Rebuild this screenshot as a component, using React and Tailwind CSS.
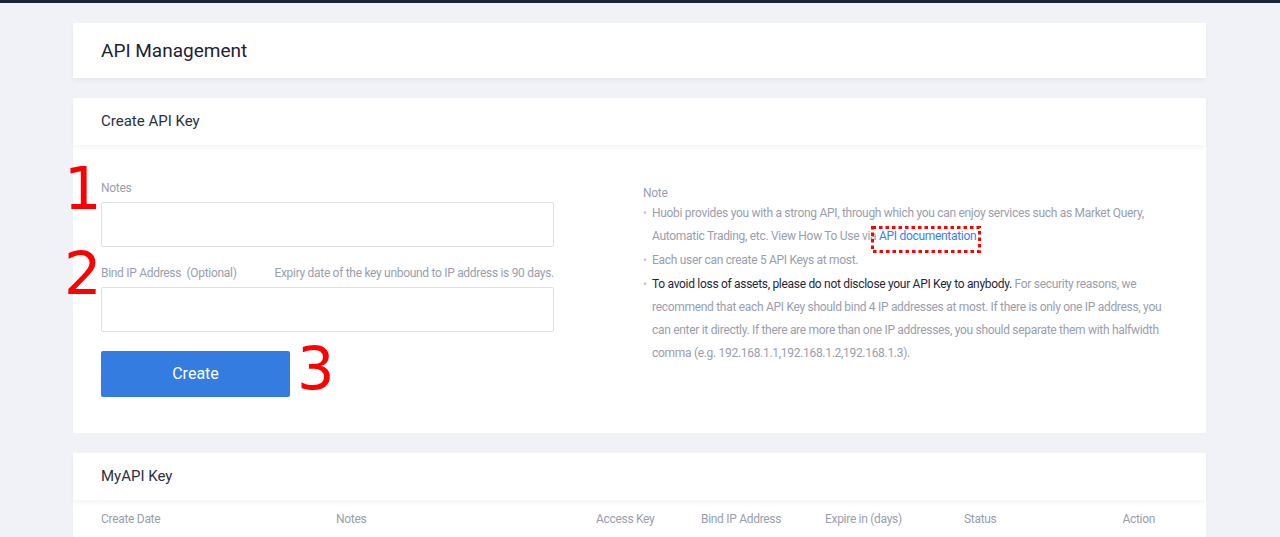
import React from 'react';

const font = { fontFamily: 'Roboto, "Liberation Sans", sans-serif' };

function Mark({ children, className }) {
  return (
    <span
      className={`absolute text-[#ff0000] text-[59px] leading-[60px] ${className}`}
      style={{ fontFamily: '"DejaVu Sans", sans-serif' }}
    >
      {children}
    </span>
  );
}

function CardHeader({ title, big }) {
  return (
    <div
      className={`relative z-10 bg-white px-[28px] flex items-center shadow-[0_3px_5px_rgba(30,35,60,0.04)] ${
        big ? 'h-[55px] pt-[2px] text-[19px] text-[#1d2235]' : 'h-[47px] text-[15px] text-[#2a2f42]'
      }`}
    >
      {title}
    </div>
  );
}

export default function App() {
  const columns = [
    { label: 'Create Date', w: 'w-[235px]' },
    { label: 'Notes', w: 'w-[260px]' },
    { label: 'Access Key', w: 'w-[105px]' },
    { label: 'Bind IP Address', w: 'w-[124px]' },
    { label: 'Expire in (days)', w: 'w-[139px]' },
    { label: 'Status', w: 'flex-1' },
  ];

  return (
    <div className="h-[537px] overflow-hidden bg-[#f1f2f7]" style={font}>
      <div className="h-[3px] bg-[#1c2438]" />
      <div className="w-[1133px] ml-[73px] pt-[20px] flex flex-col gap-[20px]">
        <div className="bg-white rounded-[2px]">
          <CardHeader title="API Management" big />
        </div>

        <div className="bg-white rounded-[2px]">
          <CardHeader title="Create API Key" />
          <div className="relative flex px-[28px] pt-[36px] pb-[36px] text-[12px] tracking-[-0.3px]">
            <Mark className="left-[-9px] top-[14px]">1</Mark>
            <Mark className="left-[-9px] top-[99px]">2</Mark>
            <Mark className="left-[224px] top-[194px]">3</Mark>

            <div className="w-[453px]">
              <div className="text-[#9a9eae] leading-[14px]">Notes</div>
              <input className="mt-[7px] block w-full h-[45px] border border-[#dddfe6] rounded-[2px] outline-none" />
              <div className="mt-[19px] flex justify-between text-[#9a9eae] leading-[14px]">
                <span>Bind IP Address&nbsp; (Optional)</span>
                <span>Expiry date of the key unbound to IP address is 90 days.</span>
              </div>
              <input className="mt-[7px] block w-full h-[45px] border border-[#dddfe6] rounded-[2px] outline-none" />
              <button className="mt-[19px] w-[189px] h-[46px] bg-[#357ce0] rounded-[2px] text-white text-[16px] tracking-normal">
                Create
              </button>
            </div>

            <div className="ml-[89px] w-[528px] pt-[5px] leading-[23px] text-[#9a9eae]">
              <div className="leading-[14px] mb-[2px]">Note</div>
              <ul className="flex flex-col gap-[1px]">
                <li className="flex">
                  <span className="w-[9px] shrink-0 text-[#c7c9d2]">•</span>
                  <span>
                    Huobi provides you with a strong API, through which you can enjoy services such as Market Query,
                    Automatic Trading, etc. View How To Use via{' '}
                    <span className="relative text-[#3c7ff0]">
                      API documentation
                      <svg
                        className="absolute left-[-8px] top-[-3px] overflow-visible"
                        width="110"
                        height="27"
                      >
                        <rect
                          x="1.5"
                          y="1.5"
                          width="107"
                          height="24"
                          fill="none"
                          stroke="#ff0000"
                          strokeWidth="3"
                          strokeDasharray="3.5 3"
                        />
                      </svg>
                    </span>
                  </span>
                </li>
                <li className="flex">
                  <span className="w-[9px] shrink-0 text-[#c7c9d2]">•</span>
                  <span>Each user can create 5 API Keys at most.</span>
                </li>
                <li className="flex">
                  <span className="w-[9px] shrink-0 text-[#c7c9d2]">•</span>
                  <span>
                    <span className="text-[#23273a]">
                      To avoid loss of assets, please do not disclose your API Key to anybody.
                    </span>{' '}
                    For security reasons, we recommend that each API Key should bind 4 IP addresses at most. If there is
                    only one IP address, you can enter it directly. If there are more than one IP addresses, you should
                    separate them with halfwidth comma (e.g. 192.168.1.1,192.168.1.2,192.168.1.3).
                  </span>
                </li>
              </ul>
            </div>
          </div>
        </div>

        <div className="bg-white rounded-[2px]">
          <CardHeader title="MyAPI Key" />
          <div className="flex px-[28px] pr-[51px] pt-[10px] h-[60px] text-[12px] tracking-[-0.3px] text-[#9a9eae]">
            {columns.map((c) => (
              <div key={c.label} className={c.w}>
                {c.label}
              </div>
            ))}
            <div className="text-right">Action</div>
          </div>
        </div>
      </div>
    </div>
  );
}
